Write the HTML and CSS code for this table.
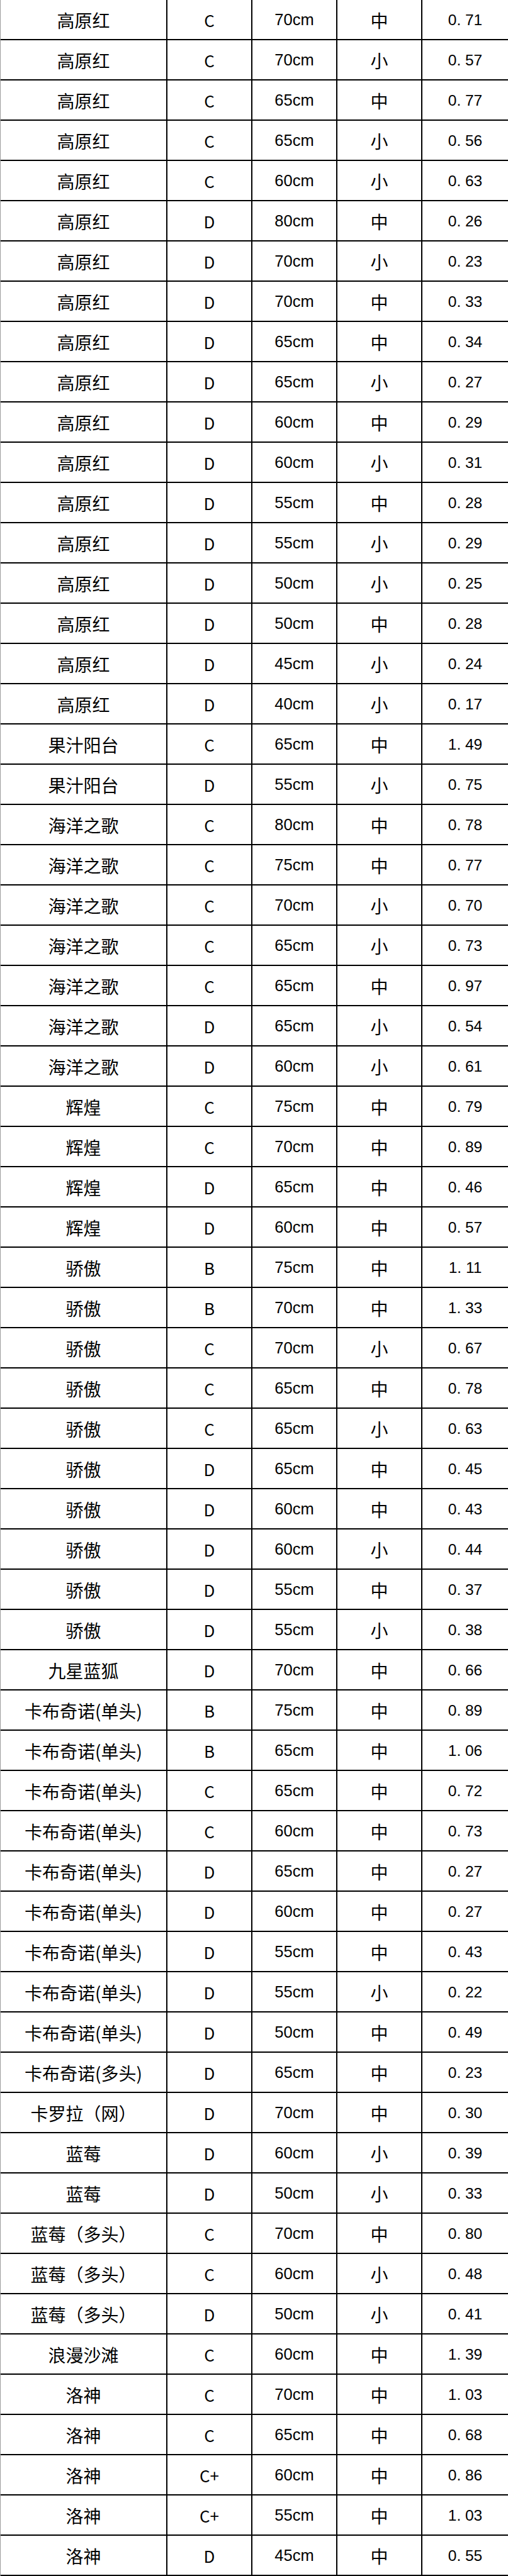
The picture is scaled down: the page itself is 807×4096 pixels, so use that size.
FILE: index.html
```html
<!DOCTYPE html>
<html lang="zh-CN">
<head>
<meta charset="utf-8">
<title>价格表</title>
<link rel="stylesheet" href="styles.css">
</head>
<body>
<div class="sheet">
<div class="c name">高原红</div><div class="c grade">C</div><div class="c size">70cm</div><div class="c cat">中</div><div class="c price">0<span class="dot">.</span>71</div>
<div class="c name">高原红</div><div class="c grade">C</div><div class="c size">70cm</div><div class="c cat">小</div><div class="c price">0<span class="dot">.</span>57</div>
<div class="c name">高原红</div><div class="c grade">C</div><div class="c size">65cm</div><div class="c cat">中</div><div class="c price">0<span class="dot">.</span>77</div>
<div class="c name">高原红</div><div class="c grade">C</div><div class="c size">65cm</div><div class="c cat">小</div><div class="c price">0<span class="dot">.</span>56</div>
<div class="c name">高原红</div><div class="c grade">C</div><div class="c size">60cm</div><div class="c cat">小</div><div class="c price">0<span class="dot">.</span>63</div>
<div class="c name">高原红</div><div class="c grade">D</div><div class="c size">80cm</div><div class="c cat">中</div><div class="c price">0<span class="dot">.</span>26</div>
<div class="c name">高原红</div><div class="c grade">D</div><div class="c size">70cm</div><div class="c cat">小</div><div class="c price">0<span class="dot">.</span>23</div>
<div class="c name">高原红</div><div class="c grade">D</div><div class="c size">70cm</div><div class="c cat">中</div><div class="c price">0<span class="dot">.</span>33</div>
<div class="c name">高原红</div><div class="c grade">D</div><div class="c size">65cm</div><div class="c cat">中</div><div class="c price">0<span class="dot">.</span>34</div>
<div class="c name">高原红</div><div class="c grade">D</div><div class="c size">65cm</div><div class="c cat">小</div><div class="c price">0<span class="dot">.</span>27</div>
<div class="c name">高原红</div><div class="c grade">D</div><div class="c size">60cm</div><div class="c cat">中</div><div class="c price">0<span class="dot">.</span>29</div>
<div class="c name">高原红</div><div class="c grade">D</div><div class="c size">60cm</div><div class="c cat">小</div><div class="c price">0<span class="dot">.</span>31</div>
<div class="c name">高原红</div><div class="c grade">D</div><div class="c size">55cm</div><div class="c cat">中</div><div class="c price">0<span class="dot">.</span>28</div>
<div class="c name">高原红</div><div class="c grade">D</div><div class="c size">55cm</div><div class="c cat">小</div><div class="c price">0<span class="dot">.</span>29</div>
<div class="c name">高原红</div><div class="c grade">D</div><div class="c size">50cm</div><div class="c cat">小</div><div class="c price">0<span class="dot">.</span>25</div>
<div class="c name">高原红</div><div class="c grade">D</div><div class="c size">50cm</div><div class="c cat">中</div><div class="c price">0<span class="dot">.</span>28</div>
<div class="c name">高原红</div><div class="c grade">D</div><div class="c size">45cm</div><div class="c cat">小</div><div class="c price">0<span class="dot">.</span>24</div>
<div class="c name">高原红</div><div class="c grade">D</div><div class="c size">40cm</div><div class="c cat">小</div><div class="c price">0<span class="dot">.</span>17</div>
<div class="c name">果汁阳台</div><div class="c grade">C</div><div class="c size">65cm</div><div class="c cat">中</div><div class="c price">1<span class="dot">.</span>49</div>
<div class="c name">果汁阳台</div><div class="c grade">D</div><div class="c size">55cm</div><div class="c cat">小</div><div class="c price">0<span class="dot">.</span>75</div>
<div class="c name">海洋之歌</div><div class="c grade">C</div><div class="c size">80cm</div><div class="c cat">中</div><div class="c price">0<span class="dot">.</span>78</div>
<div class="c name">海洋之歌</div><div class="c grade">C</div><div class="c size">75cm</div><div class="c cat">中</div><div class="c price">0<span class="dot">.</span>77</div>
<div class="c name">海洋之歌</div><div class="c grade">C</div><div class="c size">70cm</div><div class="c cat">小</div><div class="c price">0<span class="dot">.</span>70</div>
<div class="c name">海洋之歌</div><div class="c grade">C</div><div class="c size">65cm</div><div class="c cat">小</div><div class="c price">0<span class="dot">.</span>73</div>
<div class="c name">海洋之歌</div><div class="c grade">C</div><div class="c size">65cm</div><div class="c cat">中</div><div class="c price">0<span class="dot">.</span>97</div>
<div class="c name">海洋之歌</div><div class="c grade">D</div><div class="c size">65cm</div><div class="c cat">小</div><div class="c price">0<span class="dot">.</span>54</div>
<div class="c name">海洋之歌</div><div class="c grade">D</div><div class="c size">60cm</div><div class="c cat">小</div><div class="c price">0<span class="dot">.</span>61</div>
<div class="c name">辉煌</div><div class="c grade">C</div><div class="c size">75cm</div><div class="c cat">中</div><div class="c price">0<span class="dot">.</span>79</div>
<div class="c name">辉煌</div><div class="c grade">C</div><div class="c size">70cm</div><div class="c cat">中</div><div class="c price">0<span class="dot">.</span>89</div>
<div class="c name">辉煌</div><div class="c grade">D</div><div class="c size">65cm</div><div class="c cat">中</div><div class="c price">0<span class="dot">.</span>46</div>
<div class="c name">辉煌</div><div class="c grade">D</div><div class="c size">60cm</div><div class="c cat">中</div><div class="c price">0<span class="dot">.</span>57</div>
<div class="c name">骄傲</div><div class="c grade">B</div><div class="c size">75cm</div><div class="c cat">中</div><div class="c price">1<span class="dot">.</span>11</div>
<div class="c name">骄傲</div><div class="c grade">B</div><div class="c size">70cm</div><div class="c cat">中</div><div class="c price">1<span class="dot">.</span>33</div>
<div class="c name">骄傲</div><div class="c grade">C</div><div class="c size">70cm</div><div class="c cat">小</div><div class="c price">0<span class="dot">.</span>67</div>
<div class="c name">骄傲</div><div class="c grade">C</div><div class="c size">65cm</div><div class="c cat">中</div><div class="c price">0<span class="dot">.</span>78</div>
<div class="c name">骄傲</div><div class="c grade">C</div><div class="c size">65cm</div><div class="c cat">小</div><div class="c price">0<span class="dot">.</span>63</div>
<div class="c name">骄傲</div><div class="c grade">D</div><div class="c size">65cm</div><div class="c cat">中</div><div class="c price">0<span class="dot">.</span>45</div>
<div class="c name">骄傲</div><div class="c grade">D</div><div class="c size">60cm</div><div class="c cat">中</div><div class="c price">0<span class="dot">.</span>43</div>
<div class="c name">骄傲</div><div class="c grade">D</div><div class="c size">60cm</div><div class="c cat">小</div><div class="c price">0<span class="dot">.</span>44</div>
<div class="c name">骄傲</div><div class="c grade">D</div><div class="c size">55cm</div><div class="c cat">中</div><div class="c price">0<span class="dot">.</span>37</div>
<div class="c name">骄傲</div><div class="c grade">D</div><div class="c size">55cm</div><div class="c cat">小</div><div class="c price">0<span class="dot">.</span>38</div>
<div class="c name">九星蓝狐</div><div class="c grade">D</div><div class="c size">70cm</div><div class="c cat">中</div><div class="c price">0<span class="dot">.</span>66</div>
<div class="c name">卡布奇诺(单头)</div><div class="c grade">B</div><div class="c size">75cm</div><div class="c cat">中</div><div class="c price">0<span class="dot">.</span>89</div>
<div class="c name">卡布奇诺(单头)</div><div class="c grade">B</div><div class="c size">65cm</div><div class="c cat">中</div><div class="c price">1<span class="dot">.</span>06</div>
<div class="c name">卡布奇诺(单头)</div><div class="c grade">C</div><div class="c size">65cm</div><div class="c cat">中</div><div class="c price">0<span class="dot">.</span>72</div>
<div class="c name">卡布奇诺(单头)</div><div class="c grade">C</div><div class="c size">60cm</div><div class="c cat">中</div><div class="c price">0<span class="dot">.</span>73</div>
<div class="c name">卡布奇诺(单头)</div><div class="c grade">D</div><div class="c size">65cm</div><div class="c cat">中</div><div class="c price">0<span class="dot">.</span>27</div>
<div class="c name">卡布奇诺(单头)</div><div class="c grade">D</div><div class="c size">60cm</div><div class="c cat">中</div><div class="c price">0<span class="dot">.</span>27</div>
<div class="c name">卡布奇诺(单头)</div><div class="c grade">D</div><div class="c size">55cm</div><div class="c cat">中</div><div class="c price">0<span class="dot">.</span>43</div>
<div class="c name">卡布奇诺(单头)</div><div class="c grade">D</div><div class="c size">55cm</div><div class="c cat">小</div><div class="c price">0<span class="dot">.</span>22</div>
<div class="c name">卡布奇诺(单头)</div><div class="c grade">D</div><div class="c size">50cm</div><div class="c cat">中</div><div class="c price">0<span class="dot">.</span>49</div>
<div class="c name">卡布奇诺(多头)</div><div class="c grade">D</div><div class="c size">65cm</div><div class="c cat">中</div><div class="c price">0<span class="dot">.</span>23</div>
<div class="c name">卡罗拉（网）</div><div class="c grade">D</div><div class="c size">70cm</div><div class="c cat">中</div><div class="c price">0<span class="dot">.</span>30</div>
<div class="c name">蓝莓</div><div class="c grade">D</div><div class="c size">60cm</div><div class="c cat">小</div><div class="c price">0<span class="dot">.</span>39</div>
<div class="c name">蓝莓</div><div class="c grade">D</div><div class="c size">50cm</div><div class="c cat">小</div><div class="c price">0<span class="dot">.</span>33</div>
<div class="c name">蓝莓（多头）</div><div class="c grade">C</div><div class="c size">70cm</div><div class="c cat">中</div><div class="c price">0<span class="dot">.</span>80</div>
<div class="c name">蓝莓（多头）</div><div class="c grade">C</div><div class="c size">60cm</div><div class="c cat">小</div><div class="c price">0<span class="dot">.</span>48</div>
<div class="c name">蓝莓（多头）</div><div class="c grade">D</div><div class="c size">50cm</div><div class="c cat">小</div><div class="c price">0<span class="dot">.</span>41</div>
<div class="c name">浪漫沙滩</div><div class="c grade">C</div><div class="c size">60cm</div><div class="c cat">中</div><div class="c price">1<span class="dot">.</span>39</div>
<div class="c name">洛神</div><div class="c grade">C</div><div class="c size">70cm</div><div class="c cat">中</div><div class="c price">1<span class="dot">.</span>03</div>
<div class="c name">洛神</div><div class="c grade">C</div><div class="c size">65cm</div><div class="c cat">中</div><div class="c price">0<span class="dot">.</span>68</div>
<div class="c name">洛神</div><div class="c grade">C+</div><div class="c size">60cm</div><div class="c cat">中</div><div class="c price">0<span class="dot">.</span>86</div>
<div class="c name">洛神</div><div class="c grade">C+</div><div class="c size">55cm</div><div class="c cat">中</div><div class="c price">1<span class="dot">.</span>03</div>
<div class="c name">洛神</div><div class="c grade">D</div><div class="c size">45cm</div><div class="c cat">中</div><div class="c price">0<span class="dot">.</span>55</div>
</div>
</body>
</html>
```
FILE: styles.css
```css
html, body {
  margin: 0;
  padding: 0;
  background: #fff;
}

.sheet {
  width: 807px;
  display: grid;
  grid-template-columns: 265px 135px 135px 135px 1fr;
  grid-auto-rows: 64px;
  border-left: 1px solid #9a9a9a;
  box-sizing: border-box;
  color: #000;
  font-family: "Noto Sans CJK SC", "Noto Sans", sans-serif;
}

.c {
  box-sizing: border-box;
  border-right: 2px solid #000;
  border-bottom: 2px solid #000;
  display: flex;
  align-items: center;
  justify-content: center;
  padding-top: 2px;
  white-space: nowrap;
  line-height: 1;
}

.name,
.cat {
  font-size: 28px;
}

.grade {
  font-family: "Liberation Sans Narrow", "Noto Sans CJK SC", sans-serif;
  font-size: 26px;
}

.size {
  font-family: "Liberation Sans", Arial, sans-serif;
  font-size: 25.5px;
}

.price {
  border-right: none;
  font-family: "Liberation Sans", Arial, sans-serif;
  font-size: 24.5px;
}

.dot {
  display: inline-block;
  width: 0.556em;
  text-align: left;
}
```
